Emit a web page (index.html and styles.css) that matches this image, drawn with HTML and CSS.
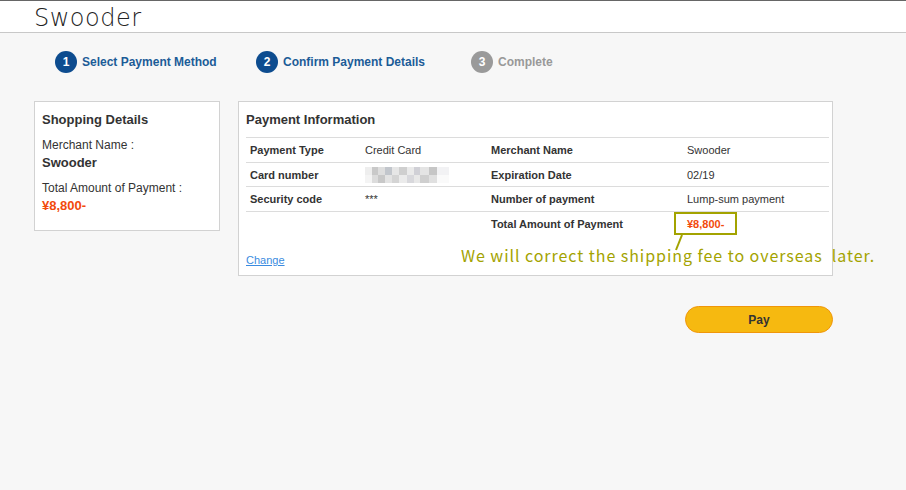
FILE: index.html
```html
<!DOCTYPE html>
<html lang="en">
<head>
    <meta charset="UTF-8">
    <title>Swooder - Confirm Payment Details</title>
    <link rel="stylesheet" href="styles.css">
</head>
<body>
    <div class="header">
        <div class="logo">Swooder</div>
    </div>

    <div class="steps">
        <div class="step done"><span class="num">1</span>Select Payment Method</div>
        <div class="step current"><span class="num">2</span>Confirm Payment Details</div>
        <div class="step todo"><span class="num">3</span>Complete</div>
    </div>

    <div class="main">
        <div class="card shopping">
            <h2>Shopping Details</h2>
            <p class="label">Merchant Name :</p>
            <p class="merchant">Swooder</p>
            <p class="label">Total Amount of Payment :</p>
            <p class="price">¥8,800-</p>
        </div>

        <div class="right">
            <div class="card payment">
                <h2>Payment Information</h2>
                <table class="info">
                    <tr>
                        <th>Payment Type</th>
                        <td>Credit Card</td>
                        <th>Merchant Name</th>
                        <td>Swooder</td>
                    </tr>
                    <tr>
                        <th>Card number</th>
                        <td><div class="blur"></div></td>
                        <th>Expiration Date</th>
                        <td>02/19</td>
                    </tr>
                    <tr>
                        <th>Security code</th>
                        <td>***</td>
                        <th>Number of payment</th>
                        <td>Lump-sum payment</td>
                    </tr>
                    <tr class="last">
                        <th></th>
                        <td></td>
                        <th>Total Amount of Payment</th>
                        <td class="total">¥8,800-</td>
                    </tr>
                </table>
                <a href="#" class="change">Change</a>

                <!-- annotation -->
                <div class="mark"></div>
                <svg class="pointer" width="10" height="16" viewBox="0 0 10 16">
                    <line x1="7" y1="0" x2="1" y2="15" stroke="#a3a300" stroke-width="2"/>
                </svg>
                <div class="note">We will correct the shipping fee to overseas &nbsp;later.</div>
            </div>
            <div class="actions">
                <button class="pay">Pay</button>
            </div>
        </div>
    </div>
</body>
</html>
```

FILE: styles.css
```css
body {
    margin: 0;
    background-color: #f7f7f7;
    font-family: "Liberation Sans", Arial, sans-serif;
    color: #333;
}

.header {
    height: 31px;
    background-color: #fff;
    border-top: 1px solid #666;
    border-bottom: 1px solid #c8c8c8;
}

.logo {
    padding-left: 34px;
    font-family: "DejaVu Sans", sans-serif;
    font-weight: 200;
    font-size: 24px;
    line-height: 34px;
    letter-spacing: 0.5px;
    color: #222;
}

.steps {
    display: flex;
    padding-left: 55px;
    margin-top: 18px;
    height: 22px;
}

.step {
    display: flex;
    align-items: center;
    font-size: 12px;
    font-weight: bold;
    color: #1c5c97;
}

.step.done { width: 201px; }
.step.current { width: 215px; }
.step.todo { color: #999; }

.num {
    width: 22px;
    height: 22px;
    border-radius: 50%;
    background-color: #0d4c8f;
    color: #fff;
    font-size: 12px;
    display: flex;
    justify-content: center;
    align-items: center;
    margin-right: 5px;
}

.todo .num {
    background-color: #9a9a9a;
}

.main {
    display: flex;
    gap: 18px;
    padding-left: 34px;
    margin-top: 28px;
}

.card {
    background-color: #fff;
    border: 1px solid #d2d2d2;
    box-sizing: border-box;
}

.card h2 {
    margin: 0;
    font-size: 13px;
    line-height: 16px;
    color: #333;
}

.shopping {
    width: 186px;
    height: 130px;
    padding: 10px 7px;
}

.shopping p {
    margin: 0;
}

.shopping .label {
    font-size: 12px;
    line-height: 14px;
    margin-top: 10px;
    color: #333;
}

.shopping .merchant {
    font-size: 13px;
    font-weight: bold;
    line-height: 16px;
    margin-top: 3px;
}

.shopping .price {
    font-size: 13px;
    font-weight: bold;
    color: #f24a0c;
    line-height: 16px;
    margin-top: 3px;
}

.right {
    width: 595px;
}

.payment {
    position: relative;
    height: 175px;
    padding: 10px 3px 0 7px;
}

.info {
    width: 100%;
    border-collapse: collapse;
    margin-top: 9px;
    font-size: 11px;
}

.info th,
.info td {
    text-align: left;
    padding: 0 4px;
    height: 23.7px;
    border-top: 1px solid #dcdcdc;
    border-bottom: 1px solid #dcdcdc;
    color: #333;
}

.info th {
    font-weight: bold;
}

.info th:nth-child(1) { width: 107px; }
.info td:nth-child(2) { width: 118px; }
.info th:nth-child(3) { width: 188px; }

.info .last th,
.info .last td {
    border-bottom: none;
}

.info .total {
    color: #f24a0c;
    font-weight: bold;
}

.blur {
    width: 84px;
    height: 16px;
    background:
        linear-gradient(90deg, #eee 0 8%, #c9c9c9 8% 16%, #dedede 16% 24%, #c2c6cc 24% 32%, #e6e6e6 32% 40%, #cfcfcf 40% 50%, #eaeaea 50% 58%, #d0d0d6 58% 66%, #e4e4e4 66% 76%, #c6c6c6 76% 86%, #f2f2f4 86% 100%) top / 100% 50% no-repeat,
        linear-gradient(90deg, #f4f4f4 0 8%, #dcdcdc 8% 16%, #c8c8c8 16% 24%, #e3e3e3 24% 32%, #d4d4d4 32% 40%, #ebebeb 40% 50%, #d8d8dc 50% 58%, #e8e8e8 58% 66%, #cfcfcf 66% 76%, #e0e0e0 76% 86%, #fafafa 86% 100%) bottom / 100% 50% no-repeat;
}

.change {
    display: inline-block;
    margin-top: 18px;
    font-size: 11px;
    color: #3b8be0;
}

.mark {
    position: absolute;
    left: 435px;
    top: 110px;
    width: 59px;
    height: 19px;
    border: 2px solid #a3a300;
}

.pointer {
    position: absolute;
    left: 436px;
    top: 133px;
}

.note {
    position: absolute;
    left: 222px;
    top: 143px;
    white-space: nowrap;
    font-family: "Noto Sans CJK JP", sans-serif;
    font-size: 16px;
    letter-spacing: 0.95px;
    line-height: 20px;
    color: #a3a300;
}

.actions {
    display: flex;
    justify-content: flex-end;
    margin-top: 30px;
}

.pay {
    width: 148px;
    height: 27px;
    border: 1px solid #f0960a;
    border-radius: 14px;
    background-color: #f6b910;
    font-family: "Liberation Sans", Arial, sans-serif;
    font-size: 12px;
    font-weight: bold;
    color: #333;
}
```
